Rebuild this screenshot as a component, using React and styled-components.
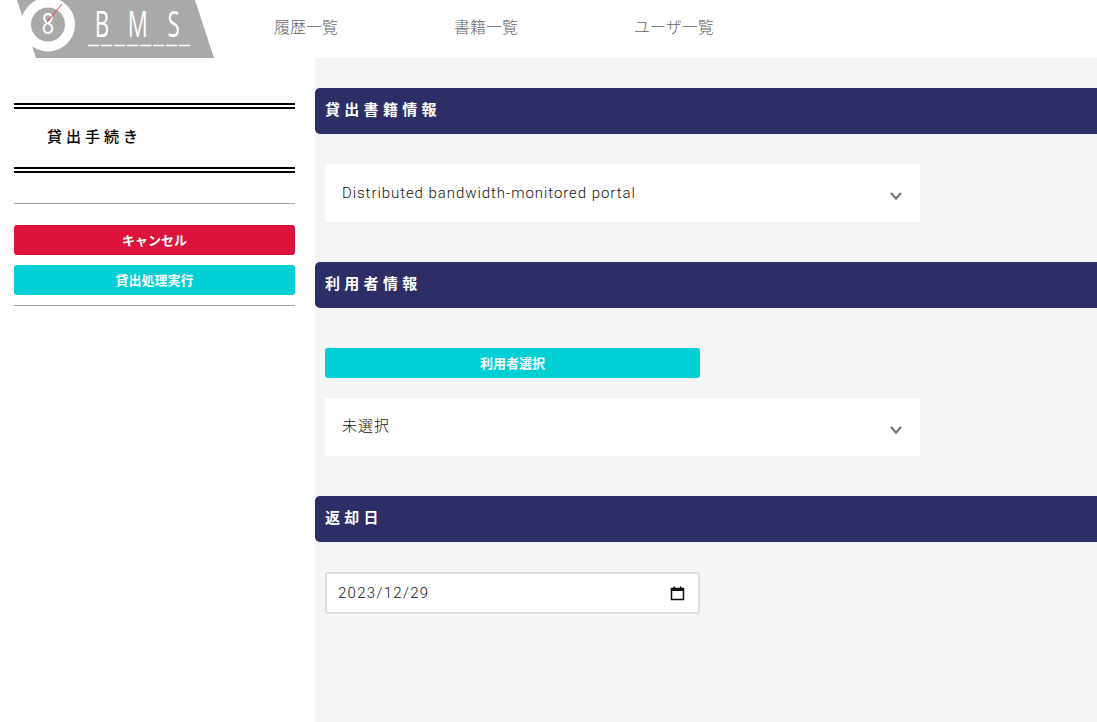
import React from 'react';
import styled, { createGlobalStyle } from 'styled-components';

const GlobalStyle = createGlobalStyle`
  html, body {
    margin: 0;
    padding: 0;
    height: 100%;
    background: #fff;
    overflow: hidden;
    font-family: "Noto Sans CJK JP", "Noto Sans", sans-serif;
  }
  * {
    box-sizing: border-box;
  }
`;

const Page = styled.div`
  width: 1097px;
  height: 722px;
  display: flex;
  flex-direction: column;
`;

const Header = styled.header`
  height: 58px;
  display: flex;
  align-items: flex-start;
  flex-shrink: 0;
`;

const LogoWrap = styled.div`
  width: 274px;
  height: 58px;
  flex-shrink: 0;
`;

const Nav = styled.nav`
  display: flex;
  padding-top: 16px;
`;

const NavLink = styled.a`
  width: ${(p) => p.$width}px;
  font-size: 16px;
  line-height: 20px;
  font-weight: 300;
  color: #666;
`;

const Body = styled.div`
  flex: 1;
  display: flex;
  min-height: 0;
`;

const Sidebar = styled.aside`
  width: 315px;
  flex-shrink: 0;
  padding: 45px 20px 0 14px;
`;

const SideTitle = styled.h2`
  margin: 0;
  height: 70px;
  padding: 0 0 6px 33px;
  border-top: 6px double #000;
  border-bottom: 6px double #000;
  display: flex;
  align-items: center;
  font-size: 15px;
  font-weight: 500;
  letter-spacing: 4px;
  color: #000;
`;

const ActionGroup = styled.div`
  margin-top: 30px;
  padding: 21px 0 10px;
  border-top: 1px solid #a5a5a5;
  border-bottom: 1px solid #a5a5a5;
  display: flex;
  flex-direction: column;
  gap: 10px;
`;

const ActionButton = styled.button`
  width: ${(p) => p.$width || '100%'};
  height: 30px;
  padding: 0 0 2px;
  border: none;
  border-radius: 3px;
  background: ${(p) => p.$color};
  color: #fff;
  font-family: inherit;
  font-size: 13px;
  font-weight: 700;
  cursor: pointer;
`;

const Main = styled.main`
  flex: 1;
  background: #f4f5f7;
  padding-top: 30px;
`;

const SectionBar = styled.h3`
  margin: 0;
  height: 46px;
  padding: 0 0 6px 10px;
  display: flex;
  align-items: center;
  background: #2d2e66;
  border-radius: 5px 0 0 5px;
  color: #fff;
  font-size: 15px;
  font-weight: 700;
  letter-spacing: 4.3px;
`;

const SectionBody = styled.div`
  padding: ${(p) => p.$top || 30}px 10px 40px;
  display: flex;
  flex-direction: column;
  align-items: flex-start;
  gap: 20px;
`;

const SelectBox = styled.div`
  position: relative;
  width: 595px;
  height: 58px;
  padding: 0 17px ${(p) => (p.$cjk ? 6 : 1)}px;
  background: #fff;
  display: flex;
  align-items: center;
  color: #111;
  font-family: Roboto, "Noto Sans CJK JP", sans-serif;
  font-size: 15px;
  font-weight: 300;
  letter-spacing: 0.94px;
`;

const Chevron = styled.svg`
  position: absolute;
  right: 17px;
  top: 27px;
  width: 14px;
  height: 10px;
`;

const DateBox = styled.div`
  width: 375px;
  height: 42px;
  padding: 0 13px 0 11px;
  background: #fff;
  border: 2px solid #dcdddf;
  border-radius: 3px;
  display: flex;
  align-items: center;
  justify-content: space-between;
  color: #111;
  font-family: Roboto, sans-serif;
  font-size: 15px;
  font-weight: 300;
  letter-spacing: 1.3px;
`;

const Logo = () => (
  <svg width="274" height="58" viewBox="0 0 274 58">
    <polygon points="17,0 195,0 214,58 36,58" fill="#a9a9a9" />
    <circle cx="48" cy="24.5" r="22" fill="#a9a9a9" stroke="#fff" strokeWidth="10" />
    <text transform="scale(0.72 1)" x="66.7" y="34" textAnchor="middle" fontFamily="Open Sans, sans-serif" fontSize="30" fontWeight="400" fill="#fff">8</text>
    <line x1="47" y1="22" x2="62" y2="4" stroke="#f03050" strokeWidth="1" />
    <g transform="scale(0.62 1)" fontFamily="Open Sans, sans-serif" fontSize="36" fontWeight="400" fill="#fff">
      <text x="153" y="37">B</text>
      <text x="206" y="37">M</text>
      <text x="270" y="37">S</text>
    </g>
    <line x1="88" y1="45.5" x2="190" y2="45.5" stroke="#fff" strokeWidth="1.4" strokeDasharray="11.5 1.5" />
  </svg>
);

const ChevronIcon = () => (
  <Chevron viewBox="0 0 14 10">
    <path d="M2 2 L7 7.5 L12 2" fill="none" stroke="#777" strokeWidth="2.2" />
  </Chevron>
);

const CalendarIcon = () => (
  <svg width="15" height="15" viewBox="0 0 15 15">
    <path d="M1.5 2.5 H13.5 V13.5 H1.5 Z" fill="none" stroke="#111" strokeWidth="1.5" />
    <rect x="1" y="2" width="13" height="3" fill="#111" />
    <rect x="3.5" y="0.5" width="1.5" height="2" fill="#111" />
    <rect x="10" y="0.5" width="1.5" height="2" fill="#111" />
  </svg>
);

const App = () => {
  return (
    <Page>
      <GlobalStyle />
      <Header>
        <LogoWrap>
          <Logo />
        </LogoWrap>
        <Nav>
          <NavLink $width={180}>履歴一覧</NavLink>
          <NavLink $width={180}>書籍一覧</NavLink>
          <NavLink $width={100}>ユーザ一覧</NavLink>
        </Nav>
      </Header>
      <Body>
        <Sidebar>
          <SideTitle>貸出手続き</SideTitle>
          <ActionGroup>
            <ActionButton $color="#dc143c">キャンセル</ActionButton>
            <ActionButton $color="#00cfd4">貸出処理実行</ActionButton>
          </ActionGroup>
        </Sidebar>
        <Main>
          <SectionBar>貸出書籍情報</SectionBar>
          <SectionBody>
            <SelectBox>
              Distributed bandwidth-monitored portal
              <ChevronIcon />
            </SelectBox>
          </SectionBody>
          <SectionBar>利用者情報</SectionBar>
          <SectionBody $top={40}>
            <ActionButton $color="#00cfd4" $width="375px">利用者選択</ActionButton>
            <SelectBox $cjk>
              未選択
              <ChevronIcon />
            </SelectBox>
          </SectionBody>
          <SectionBar>返却日</SectionBar>
          <SectionBody>
            <DateBox>
              2023/12/29
              <CalendarIcon />
            </DateBox>
          </SectionBody>
        </Main>
      </Body>
    </Page>
  );
};

export default App;
